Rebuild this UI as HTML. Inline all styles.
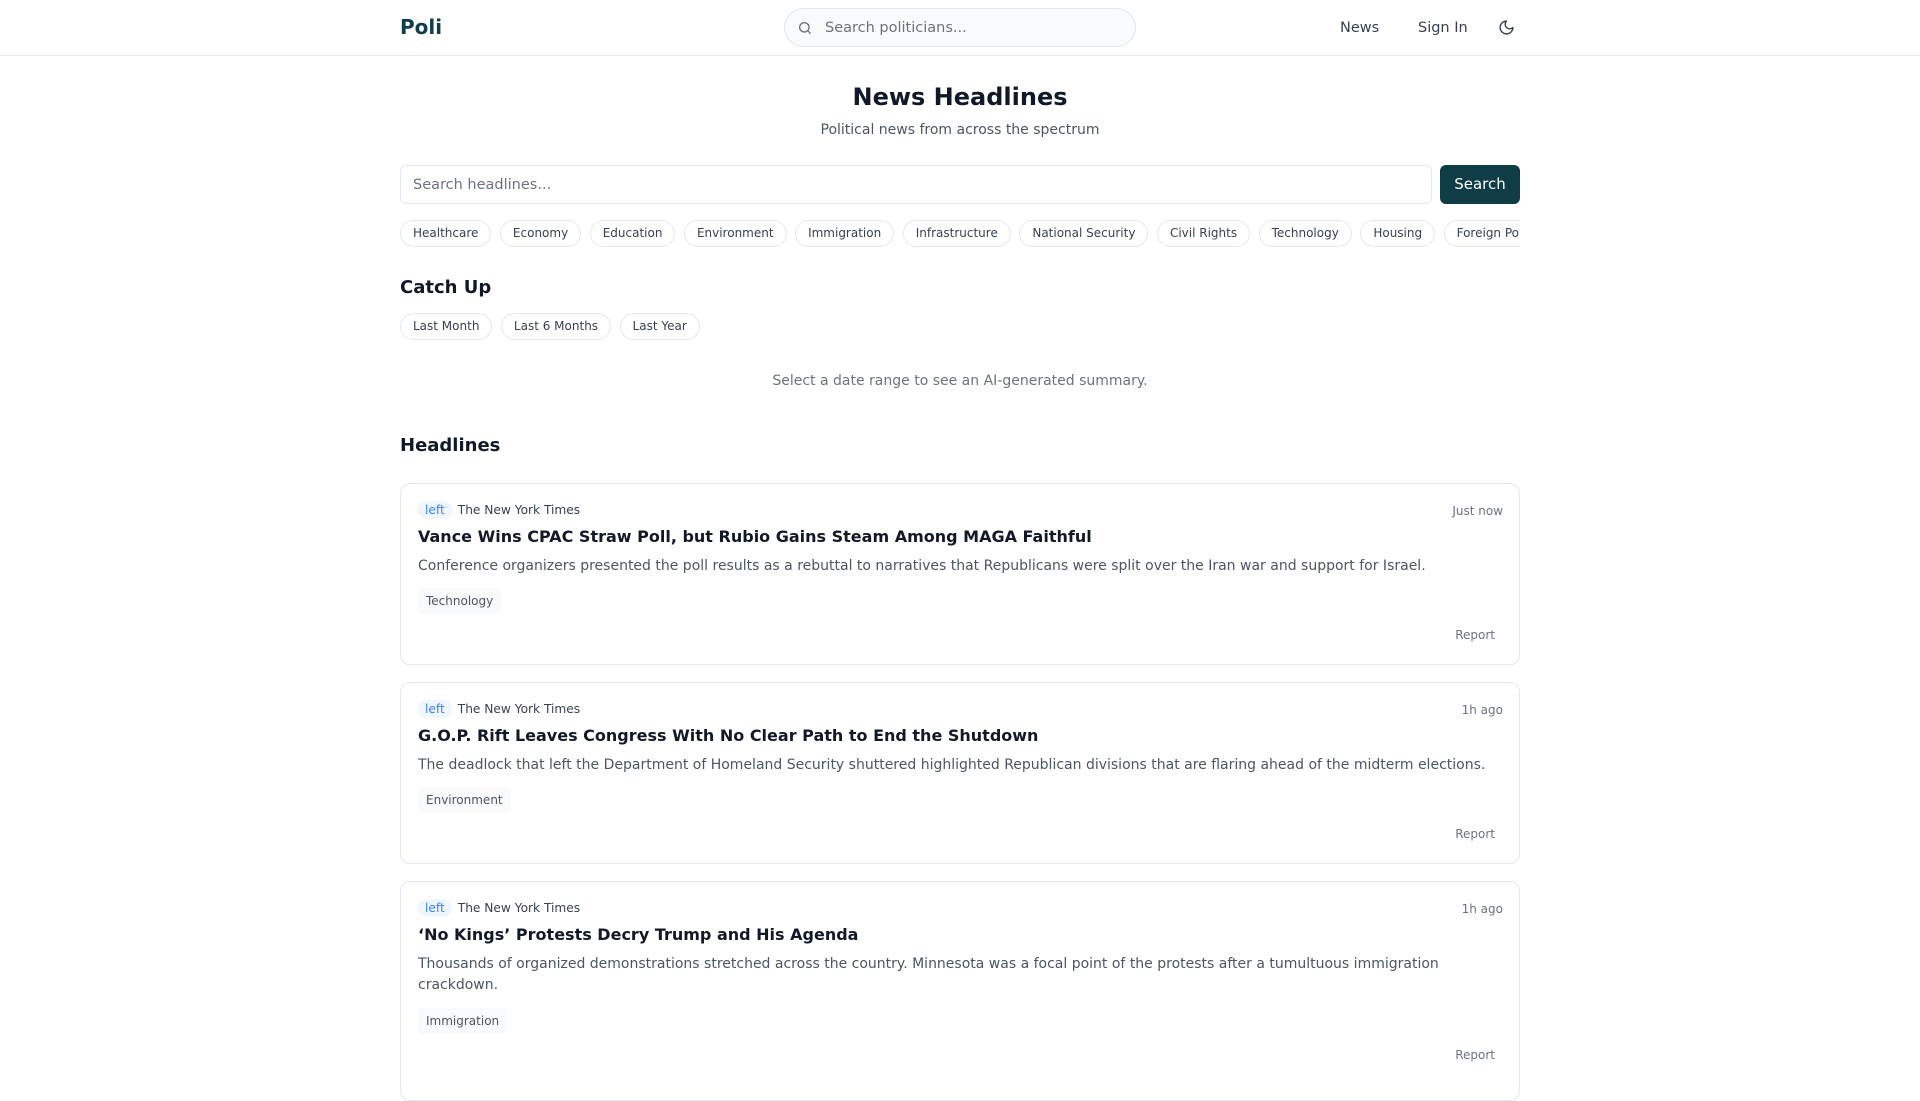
<!DOCTYPE html>
<html><head><meta charset="utf-8"><style>
*{box-sizing:border-box;margin:0;padding:0}
body{width:1920px;height:1080px;overflow:hidden;background:#fff;font-family:"DejaVu Sans","Liberation Sans",sans-serif;color:#111827}
.hdr{height:56px;border-bottom:1px solid #e5e7eb;position:relative}
.logo{position:absolute;left:400px;top:15px;font-size:20px;font-weight:bold;color:#0f3d4a}
.ps{position:absolute;left:784px;top:8px;width:352px;height:39px;border:1px solid #e2e8f0;border-radius:20px;background:#f8fafc;font-size:14.5px;color:#6b7280;padding:11px 0 0 40px}
.ps svg{position:absolute;left:12px;top:11px}
.nav{position:absolute;top:20px;font-size:14.5px;color:#374151}
.wrap{position:absolute;left:400px;width:1120px}
h1{font-size:24px;text-align:center;font-weight:bold}
.sub{text-align:center;font-size:14px;color:#4b5563}
.si{position:absolute;top:165px;left:400px;width:1032px;height:39px;border:1px solid #e2e8f0;border-radius:6px;font-size:14.5px;color:#6b7280;padding:11px 0 0 12px}
.sb{position:absolute;top:165px;left:1440px;width:80px;height:39px;background:#0e3d48;border-radius:6px;color:#fff;font-size:15px;text-align:center;line-height:39px}
.chips{position:absolute;top:220px;left:400px;width:1120px;overflow:hidden;white-space:nowrap;height:28px}
.chip{display:inline-block;height:27px;border:1px solid #e2e8f0;border-radius:14px;padding:0 12px;font-size:12px;line-height:25px;color:#374151;margin-right:8.5px}
h2{font-size:18px;font-weight:bold}
.card{position:absolute;left:400px;width:1120px;border:1px solid #e2e8f0;border-radius:10px;padding:0 17px}
.meta{position:absolute;top:17px;left:17px;font-size:12.2px;color:#374151}
.badge{display:inline-block;background:#eff6ff;color:#3b82f6;border-radius:9px;padding:2px 7px;margin-right:6px}
.time{position:absolute;top:20px;right:16px;font-size:12px;color:#6b7280}
.t{position:absolute;top:43px;left:17px;font-size:16px;font-weight:bold;color:#111827}
.d{position:absolute;top:72px;left:17px;right:40px;font-size:14px;color:#4b5563;line-height:21px}
.tag{position:absolute;left:17px;font-size:12px;color:#4b5563;background:#f8fafc;border-radius:4px;padding:6px 8px}
.rep{position:absolute;right:24px;font-size:12px;color:#6b7280}
</style></head><body>
<div class="hdr">
<div class="logo">Poli</div>
<div class="ps"><svg width="16" height="16" viewBox="0 0 24 24" fill="none" stroke="#6b7280" stroke-width="2" stroke-linecap="round"><circle cx="11" cy="11" r="7"/><path d="M20 20l-4-4"/></svg>Search politicians...</div>
<div class="nav" style="left:1340px">News</div>
<div class="nav" style="left:1418px">Sign In</div>
<svg style="position:absolute;left:1498px;top:19px" width="17" height="17" viewBox="0 0 24 24" fill="none" stroke="#374151" stroke-width="2" stroke-linecap="round" stroke-linejoin="round"><path d="M12 3a6 6 0 0 0 9 9 9 9 0 1 1-9-9z"/></svg>
</div>
<h1 class="wrap" style="top:83px">News Headlines</h1>
<div class="wrap sub" style="top:122px">Political news from across the spectrum</div>
<div class="si">Search headlines...</div>
<div class="sb">Search</div>
<div class="chips"><span class="chip">Healthcare</span><span class="chip">Economy</span><span class="chip">Education</span><span class="chip">Environment</span><span class="chip">Immigration</span><span class="chip">Infrastructure</span><span class="chip">National Security</span><span class="chip">Civil Rights</span><span class="chip">Technology</span><span class="chip">Housing</span><span class="chip">Foreign Policy</span></div>
<h2 class="wrap" style="top:277px">Catch Up</h2>
<div class="chips" style="top:313px"><span class="chip">Last Month</span><span class="chip">Last 6 Months</span><span class="chip">Last Year</span></div>
<div class="wrap sub" style="top:373px;color:#6b7280">Select a date range to see an AI-generated summary.</div>
<h2 class="wrap" style="top:435px">Headlines</h2>

<div class="card" style="top:483px;height:182px">
<div class="meta"><span class="badge">left</span>The New York Times</div><div class="time">Just now</div>
<div class="t">Vance Wins CPAC Straw Poll, but Rubio Gains Steam Among MAGA Faithful</div>
<div class="d">Conference organizers presented the poll results as a rebuttal to narratives that Republicans were split over the Iran war and support for Israel.</div>
<div class="tag" style="top:104px">Technology</div>
<div class="rep" style="top:144px">Report</div>
</div>
<div class="card" style="top:682px;height:182px">
<div class="meta"><span class="badge">left</span>The New York Times</div><div class="time">1h ago</div>
<div class="t">G.O.P. Rift Leaves Congress With No Clear Path to End the Shutdown</div>
<div class="d" style="right:0">The deadlock that left the Department of Homeland Security shuttered highlighted Republican divisions that are flaring ahead of the midterm elections.</div>
<div class="tag" style="top:104px">Environment</div>
<div class="rep" style="top:144px">Report</div>
</div>
<div class="card" style="top:881px;height:220px">
<div class="meta"><span class="badge">left</span>The New York Times</div><div class="time">1h ago</div>
<div class="t">‘No Kings’ Protests Decry Trump and His Agenda</div>
<div class="d" style="right:60px">Thousands of organized demonstrations stretched across the country. Minnesota was a focal point of the protests after a tumultuous immigration crackdown.</div>
<div class="tag" style="top:126px">Immigration</div>
<div class="rep" style="top:166px">Report</div>
</div>
</body></html>
